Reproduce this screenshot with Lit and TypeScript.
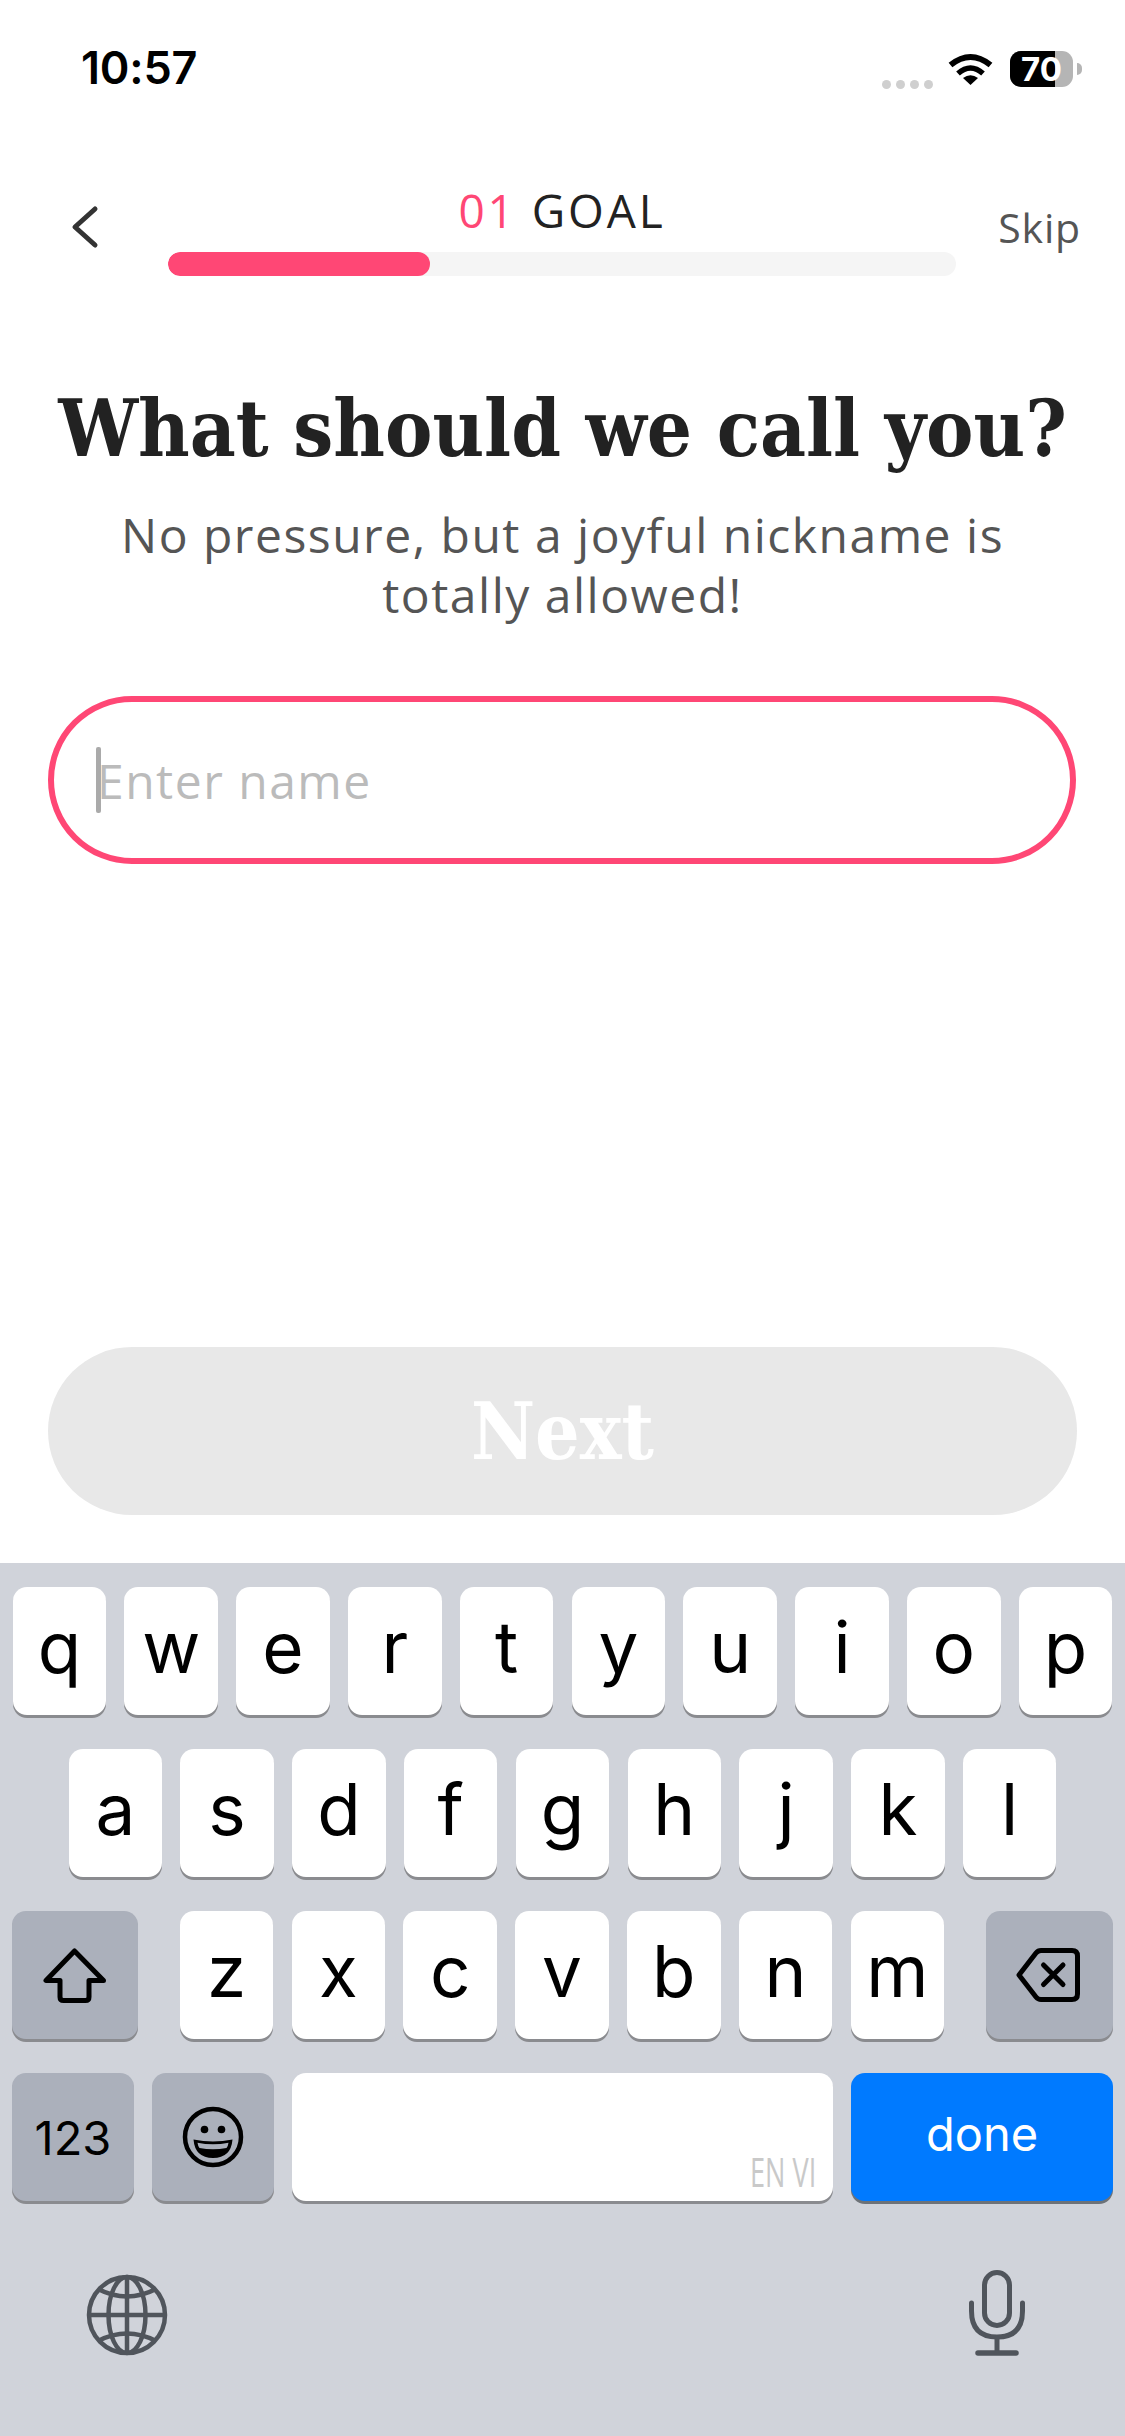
import { LitElement, html, css, svg } from "lit";
import { customElement } from "lit/decorators.js";

const ROW1 = "qwertyuiop".split("");
const ROW2 = "asdfghjkl".split("");
const ROW3 = "zxcvbnm".split("");

@customElement("app-root")
export class AppRoot extends LitElement {
  static override styles = css`
    :host {
      display: block;
      width: 1125px;
      height: 2436px;
      background: #fff;
      font-family: "Open Sans", sans-serif;
      overflow: hidden;
    }
    .page {
      height: 2436px;
      display: flex;
      flex-direction: column;
    }

    /* status bar */
    .status {
      height: 136px;
      flex: none;
      display: flex;
      justify-content: space-between;
      align-items: flex-start;
      padding: 41px 43px 0 81px;
      box-sizing: border-box;
    }
    .time {
      font: 600 45px/54px Inter, sans-serif;
      color: #000;
      letter-spacing: -0.2px;
    }
    .indicators {
      display: flex;
      align-items: flex-start;
      margin-top: 10px;
    }
    .dots {
      display: flex;
      gap: 5px;
      margin-top: 29px;
      margin-right: 15px;
    }
    .dots span {
      width: 9px;
      height: 9px;
      border-radius: 50%;
      background: #cfcfcf;
    }
    .wifi {
      display: block;
      margin-top: 1px;
      margin-right: 17px;
    }
    .battery {
      position: relative;
      width: 63px;
      height: 36px;
      border-radius: 11px;
      background: #b5b5b5;
    }
    .battery-fill {
      width: 45px;
      height: 36px;
      border-radius: 11px 0 0 11px;
      background: #000;
    }
    .battery-label {
      position: absolute;
      inset: 0;
      text-align: center;
      font: 700 33px/36px Inter, sans-serif;
      color: #fff;
    }
    .battery-tip {
      width: 5px;
      height: 12px;
      margin: 12px 0 0 4px;
      background: #b5b5b5;
      border-radius: 0 6px 6px 0;
    }

    /* header */
    .header {
      flex: none;
      display: flex;
      align-items: flex-start;
      height: 140px;
      padding: 0 44px 0 70px;
      margin-top: 47px;
      box-sizing: border-box;
    }
    .back {
      display: block;
      width: 30px;
      height: 44px;
      margin-top: 22px;
      flex: none;
    }
    .steps {
      width: 788px;
      margin-left: 68px;
      flex: none;
    }
    .step-label {
      height: 69px;
      margin-top: -3px;
      padding-bottom: 3px;
      text-align: center;
      font-size: 46px;
      line-height: 60px;
      font-weight: 500;
      color: #222;
      letter-spacing: 2.9px;
    }
    .step-label b {
      font-weight: 500;
      color: #ff4775;
    }
    .track {
      height: 24px;
      border-radius: 12px;
      background: #f5f5f5;
      overflow: hidden;
    }
    .fill {
      height: 24px;
      border-radius: 12px;
      background: #ff4775;
    }
    .skip {
      margin-left: auto;
      font-size: 41px;
      line-height: 54px;
      margin-top: 17px;
      color: #555;
      letter-spacing: 0.8px;
    }

    /* form */
    .title {
      margin: 56px 0 0;
      text-align: center;
      white-space: nowrap;
      font: 700 79px/100px "DejaVu Serif Condensed", "DejaVu Serif", serif;
      color: #222;
    }
    .subtitle {
      margin: 26px 0 0;
      text-align: center;
      font-size: 48px;
      line-height: 60px;
      color: #555;
      letter-spacing: 1.5px;
    }
    .input {
      margin: 71px 49px 0 48px;
      height: 168px;
      box-sizing: border-box;
      border: 6px solid #ff4775;
      border-radius: 84px;
      display: flex;
      align-items: center;
      padding-left: 42px;
      font-size: 48px;
      color: #bbb;
      letter-spacing: 1.5px;
    }
    .caret {
      width: 5px;
      height: 66px;
      margin-right: -4px;
      background: #aaa;
      border-radius: 2px;
    }
    .spacer {
      flex: 1;
    }
    .next {
      flex: none;
      margin: 0 48px 48px 48px;
      height: 168px;
      border-radius: 84px;
      background: #e8e8e8;
      display: flex;
      align-items: center;
      justify-content: center;
      padding-top: 2px;
      box-sizing: border-box;
      font: 700 78px/1 "DejaVu Serif Condensed", "DejaVu Serif", serif;
      color: #fff;
    }

    /* keyboard */
    .keyboard {
      flex: none;
      height: 873px;
      box-sizing: border-box;
      background: #d0d3da;
      padding: 24px 12px 0 12px;
    }
    .row {
      display: flex;
      justify-content: space-between;
      height: 131px;
      margin-bottom: 31px;
    }
    .row.center {
      justify-content: center;
      gap: 18.3px;
    }
    .letters {
      display: flex;
      gap: 18.3px;
    }
    .key {
      width: 93.5px;
      height: 128px;
      flex: none;
      position: relative;
      border-radius: 14px;
      background: #fff;
      box-shadow: 0 3px 0 #8a8b8f;
      display: flex;
      align-items: center;
      justify-content: center;
      font: 380 71px/1 Inter, sans-serif;
      color: #000;
      padding-bottom: 8px;
      box-sizing: border-box;
    }
    .key.dark {
      background: #abb0bb;
      padding-bottom: 0;
    }
    .key.shift {
      width: 126px;
      padding-right: 2px;
    }
    .key.del {
      width: 127px;
      padding-right: 4px;
    }
    .key.num {
      width: 122px;
      font-size: 47px;
      font-weight: 400;
    }
    .key.emoji {
      width: 122px;
    }
    .key.space {
      width: 541px;
    }
    .key.done {
      width: 262px;
      background: #007aff;
      box-shadow: 0 3px 0 #6d7278;
      color: #fff;
      font-size: 47px;
      font-weight: 400;
    }
    .bottom-left {
      display: flex;
      gap: 18px;
    }
    .locale {
      position: absolute;
      right: 17px;
      bottom: 15px;
      font: 400 41px/30px "Open Sans", sans-serif;
      color: #c9c9c9;
      transform: scaleX(0.66);
      transform-origin: right center;
      white-space: nowrap;
    }
    .tools {
      display: flex;
      justify-content: space-between;
      align-items: flex-start;
      padding: 39px 88px 0 74px;
    }
    .tools .mic {
      margin-top: -4px;
    }
    svg {
      display: block;
      flex: none;
    }
  `;

  private wifi() {
    return html`<svg class="wifi" width="45" height="33" viewBox="0 0 45 33">
      <path d="M2.5 13Q22.5-3 42.5 13" fill="none" stroke="#000" stroke-width="6" />
      <path d="M10 21.5Q22.5 10.5 35 21.5" fill="none" stroke="#000" stroke-width="5.5" />
      <path d="M22.5 33L15 26Q22.5 20.5 30 26Z" fill="#000" />
    </svg>`;
  }

  private shiftIcon() {
    return html`<svg width="63" height="55" viewBox="0 0 63 55">
      <path
        d="M31.5 3L3 32.5H17V49Q17 52.500 20.500 52.500H42.500Q46 52.500 46 49V32.500H60.500Z"
        fill="none"
        stroke="#000"
        stroke-width="5"
        stroke-linejoin="round"
      />
    </svg>`;
  }

  private deleteIcon() {
    return html`<svg width="64" height="54" viewBox="0 0 64 54">
      <path
        d="M3 27L20 5Q22 2.500 25 2.500H56Q61.500 2.500 61.500 8V46Q61.500 51.500 56 51.500H25Q22 51.500 20 49Z"
        fill="none"
        stroke="#000"
        stroke-width="5"
        stroke-linejoin="round"
      />
      <path d="M27.500 17L47 36.500M47 17L27.500 36.500" stroke="#000" stroke-width="5" stroke-linecap="round" />
    </svg>`;
  }

  private emojiIcon() {
    return html`<svg width="62" height="62" viewBox="-31 -31 62 62">
      <circle r="28" fill="none" stroke="#000" stroke-width="4.500" />
      <circle cx="-8.500" cy="-7.500" r="3.800" fill="#000" />
      <circle cx="8.500" cy="-7.500" r="3.800" fill="#000" />
      <path d="M-19.500 2.500Q0 6.500 19.500 2.500Q18 21 0 21Q-18 21-19.500 2.500Z" fill="#000" />
      <path d="M-15.500 5.800Q0 8.800 15.500 5.800Q15 9.500 13.500 11Q0 13.500-13.500 11Q-15 9.500-15.500 5.800Z" fill="#abb0bb" />
    </svg>`;
  }

  private globeIcon() {
    return svg`<svg width="82" height="82" viewBox="-41 -41 82 82" fill="none" stroke="#50555c" stroke-width="4.500">
      <circle r="38" />
      <ellipse rx="18.500" ry="38" />
      <path d="M0-38V38M-38 0H38" />
      <path d="M-29-26Q0-11 29-26M-29 26Q0 11 29 26" />
    </svg>`;
  }

  private micIcon() {
    return svg`<svg class="mic" width="56" height="86" viewBox="0 0 56 86" fill="none" stroke="#50555c" stroke-width="5">
      <rect x="15.500" y="2.500" width="25" height="53" rx="12.500" />
      <path d="M2.500 33V41Q2.500 67 28 67Q53.500 67 53.500 41V33" stroke-linecap="round" />
      <path d="M28 67V83" />
      <path d="M9 83H47" stroke-width="5.500" stroke-linecap="round" />
    </svg>`;
  }

  override render() {
    return html`
      <div class="page">
        <div class="status">
          <span class="time">10:57</span>
          <div class="indicators">
            <div class="dots"><span></span><span></span><span></span><span></span></div>
            ${this.wifi()}
            <div class="battery">
              <div class="battery-fill"></div>
              <div class="battery-label">70</div>
            </div>
            <div class="battery-tip"></div>
          </div>
        </div>

        <div class="header">
          <svg class="back" viewBox="0 0 30 44">
            <path d="M25 4L5 22L25 40" fill="none" stroke="#333" stroke-width="5" stroke-linecap="round" stroke-linejoin="round" />
          </svg>
          <div class="steps">
            <div class="step-label"><b>01</b> GOAL</div>
            <div class="track"><div class="fill" style="width: ${(262 / 788) * 100}%"></div></div>
          </div>
          <span class="skip">Skip</span>
        </div>

        <h1 class="title">What should we call you?</h1>
        <p class="subtitle">No pressure, but a joyful nickname is<br />totally allowed!</p>
        <div class="input"><span class="caret"></span><span>Enter name</span></div>

        <div class="spacer"></div>
        <div class="next">Next</div>

        <div class="keyboard">
          <div class="row center">${ROW1.map((k) => html`<div class="key">${k}</div>`)}</div>
          <div class="row center">${ROW2.map((k) => html`<div class="key">${k}</div>`)}</div>
          <div class="row">
            <div class="key dark shift">${this.shiftIcon()}</div>
            <div class="letters">${ROW3.map((k) => html`<div class="key">${k}</div>`)}</div>
            <div class="key dark del">${this.deleteIcon()}</div>
          </div>
          <div class="row">
            <div class="bottom-left">
              <div class="key dark num">123</div>
              <div class="key dark emoji">${this.emojiIcon()}</div>
              <div class="key space"><span class="locale">EN VI</span></div>
            </div>
            <div class="key done">done</div>
          </div>
          <div class="tools">${this.globeIcon()} ${this.micIcon()}</div>
        </div>
      </div>
    `;
  }
}
